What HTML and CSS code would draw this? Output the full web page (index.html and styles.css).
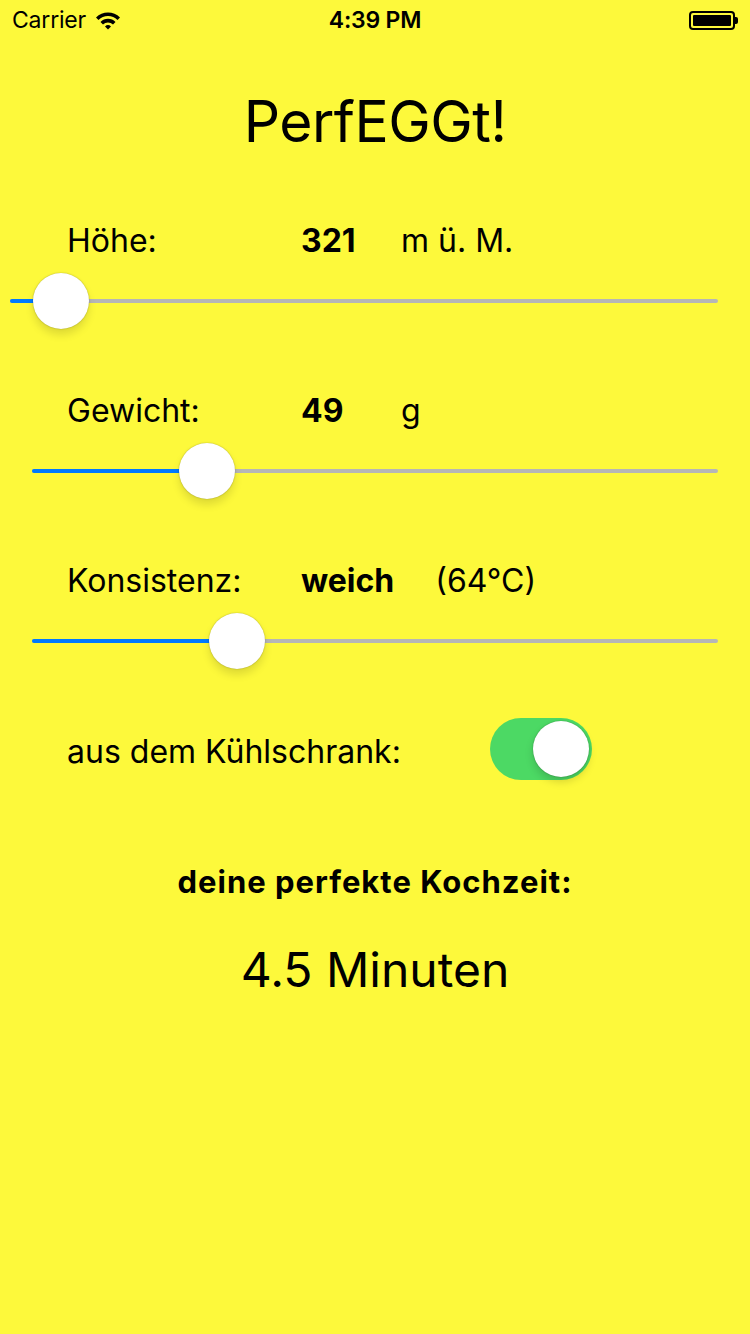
FILE: index.html
```html
<!DOCTYPE html>
<html lang="de">
<head>
<meta charset="utf-8">
<title>PerfEGGt!</title>
<link rel="stylesheet" href="styles.css">
</head>
<body>
<div class="screen">
  <div class="status">
    <div class="status-left">
      <span class="carrier">Carrier</span>
      <svg class="wifi" width="28" height="20" viewBox="0 0 28 20">
        <path d="M2 7.5 A17 17 0 0 1 26 7.5 L23.5 10 A13.5 13.5 0 0 0 4.5 10 Z" fill="#000"/>
        <path d="M6.5 12 A10.5 10.5 0 0 1 21.5 12 L19 14.5 A7 7 0 0 0 9 14.5 Z" fill="#000"/>
        <path d="M11 16.5 A4.3 4.3 0 0 1 17 16.5 L14 19.5 Z" fill="#000"/>
      </svg>
    </div>
    <div class="time">4:39 PM</div>
    <div class="status-right">
      <div class="battery"><div class="battery-fill"></div></div>
      <div class="battery-nub"></div>
    </div>
  </div>

  <h1 class="title">PerfEGGt!</h1>

  <section class="group">
    <div class="row">
      <span class="label">Höhe:</span>
      <span class="value">321</span>
      <span class="unit">m ü. M.</span>
    </div>
    <div class="slider slider-first">
      <div class="track"></div>
      <div class="fill" style="width:51px"></div>
      <div class="thumb" style="left:51px"></div>
    </div>
  </section>

  <section class="group">
    <div class="row">
      <span class="label">Gewicht:</span>
      <span class="value">49</span>
      <span class="unit">g</span>
    </div>
    <div class="slider">
      <div class="track"></div>
      <div class="fill" style="width:175px"></div>
      <div class="thumb" style="left:175px"></div>
    </div>
  </section>

  <section class="group">
    <div class="row">
      <span class="label">Konsistenz:</span>
      <span class="value">weich</span>
      <span class="unit">(64°C)</span>
    </div>
    <div class="slider">
      <div class="track"></div>
      <div class="fill" style="width:205px"></div>
      <div class="thumb" style="left:205px"></div>
    </div>
  </section>

  <div class="switch-row">
    <span class="switch-label">aus dem Kühlschrank:</span>
    <div class="switch on"><div class="knob"></div></div>
  </div>

  <div class="result-label">deine perfekte Kochzeit:</div>
  <div class="result">4.5 Minuten</div>
</div>
</body>
</html>
```
FILE: styles.css
```css
* { box-sizing: border-box; }
html, body {
  margin: 0;
  padding: 0;
  background: #fdf93b;
}
body {
  font-family: Inter, "Liberation Sans", Arial, sans-serif;
  color: #000;
}
.screen {
  width: 750px;
  height: 1334px;
  background: #fdf93b;
  display: flex;
  flex-direction: column;
}
.status {
  height: 40px;
  display: flex;
  align-items: center;
  justify-content: space-between;
  padding: 0 12px 0 12px;
  position: relative;
}
.status-left {
  display: flex;
  align-items: center;
  gap: 8px;
  width: 200px;
}
.carrier {
  font-size: 23px;
  letter-spacing: -0.2px;
}
.wifi { margin-top: -1px; }
.time {
  font-size: 23px;
  font-weight: 600;
  letter-spacing: -0.2px;
}
.status-right {
  width: 200px;
  display: flex;
  justify-content: flex-end;
  align-items: center;
}
.battery {
  width: 46px;
  height: 19px;
  border: 2px solid #000;
  border-radius: 4px;
  padding: 2px;
}
.battery-fill {
  width: 100%;
  height: 100%;
  background: #000;
  border-radius: 1px;
}
.battery-nub {
  width: 3px;
  height: 7px;
  background: #000;
  border-radius: 0 2px 2px 0;
}
.title {
  margin: 0;
  height: 164px;
  line-height: 164px;
  text-align: center;
  font-size: 57px;
  font-weight: 400;
  letter-spacing: -0.5px;
}
.group {
  height: 170px;
  display: flex;
  flex-direction: column;
}
.row {
  height: 72px;
  display: flex;
  align-items: center;
  padding-left: 67px;
  font-size: 32px;
}
.label { width: 234px; }
.value {
  font-weight: 700;
  min-width: 59px;
  margin-right: 41px;
}
.slider {
  position: relative;
  height: 50px;
  margin: 0 32px 0 32px;
}
.slider-first { margin-left: 10px; }
.track {
  position: absolute;
  left: 0;
  right: 0;
  top: 23px;
  height: 4px;
  border-radius: 2px;
  background: #b6b6b6;
}
.fill {
  position: absolute;
  left: 0;
  top: 23px;
  height: 4px;
  border-radius: 2px;
  background: #007aff;
}
.thumb {
  position: absolute;
  top: -3px;
  width: 56px;
  height: 56px;
  margin-left: -28px;
  border-radius: 50%;
  background: #fff;
  box-shadow: 0 6px 8px rgba(0,0,0,0.12), 0 0 1.5px rgba(0,0,0,0.35);
}
.switch-row {
  height: 70px;
  display: flex;
  align-items: center;
  padding-left: 67px;
  font-size: 32px;
}
.switch-label { width: 423px; padding-top: 5px; }
.switch {
  position: relative;
  width: 102px;
  height: 62px;
  border-radius: 31px;
  background: #4cd964;
}
.knob {
  position: absolute;
  top: 3px;
  right: 3px;
  width: 56px;
  height: 56px;
  border-radius: 50%;
  background: #fff;
  box-shadow: 0 5px 8px rgba(0,0,0,0.15), 0 0 1.5px rgba(0,0,0,0.35);
}
.result-label {
  margin-top: 80px;
  text-align: center;
  font-size: 31px;
  font-weight: 700;
  letter-spacing: 1px;
  line-height: 36px;
}
.result {
  margin-top: 42px;
  text-align: center;
  font-size: 48px;
  line-height: 56px;
}
```
